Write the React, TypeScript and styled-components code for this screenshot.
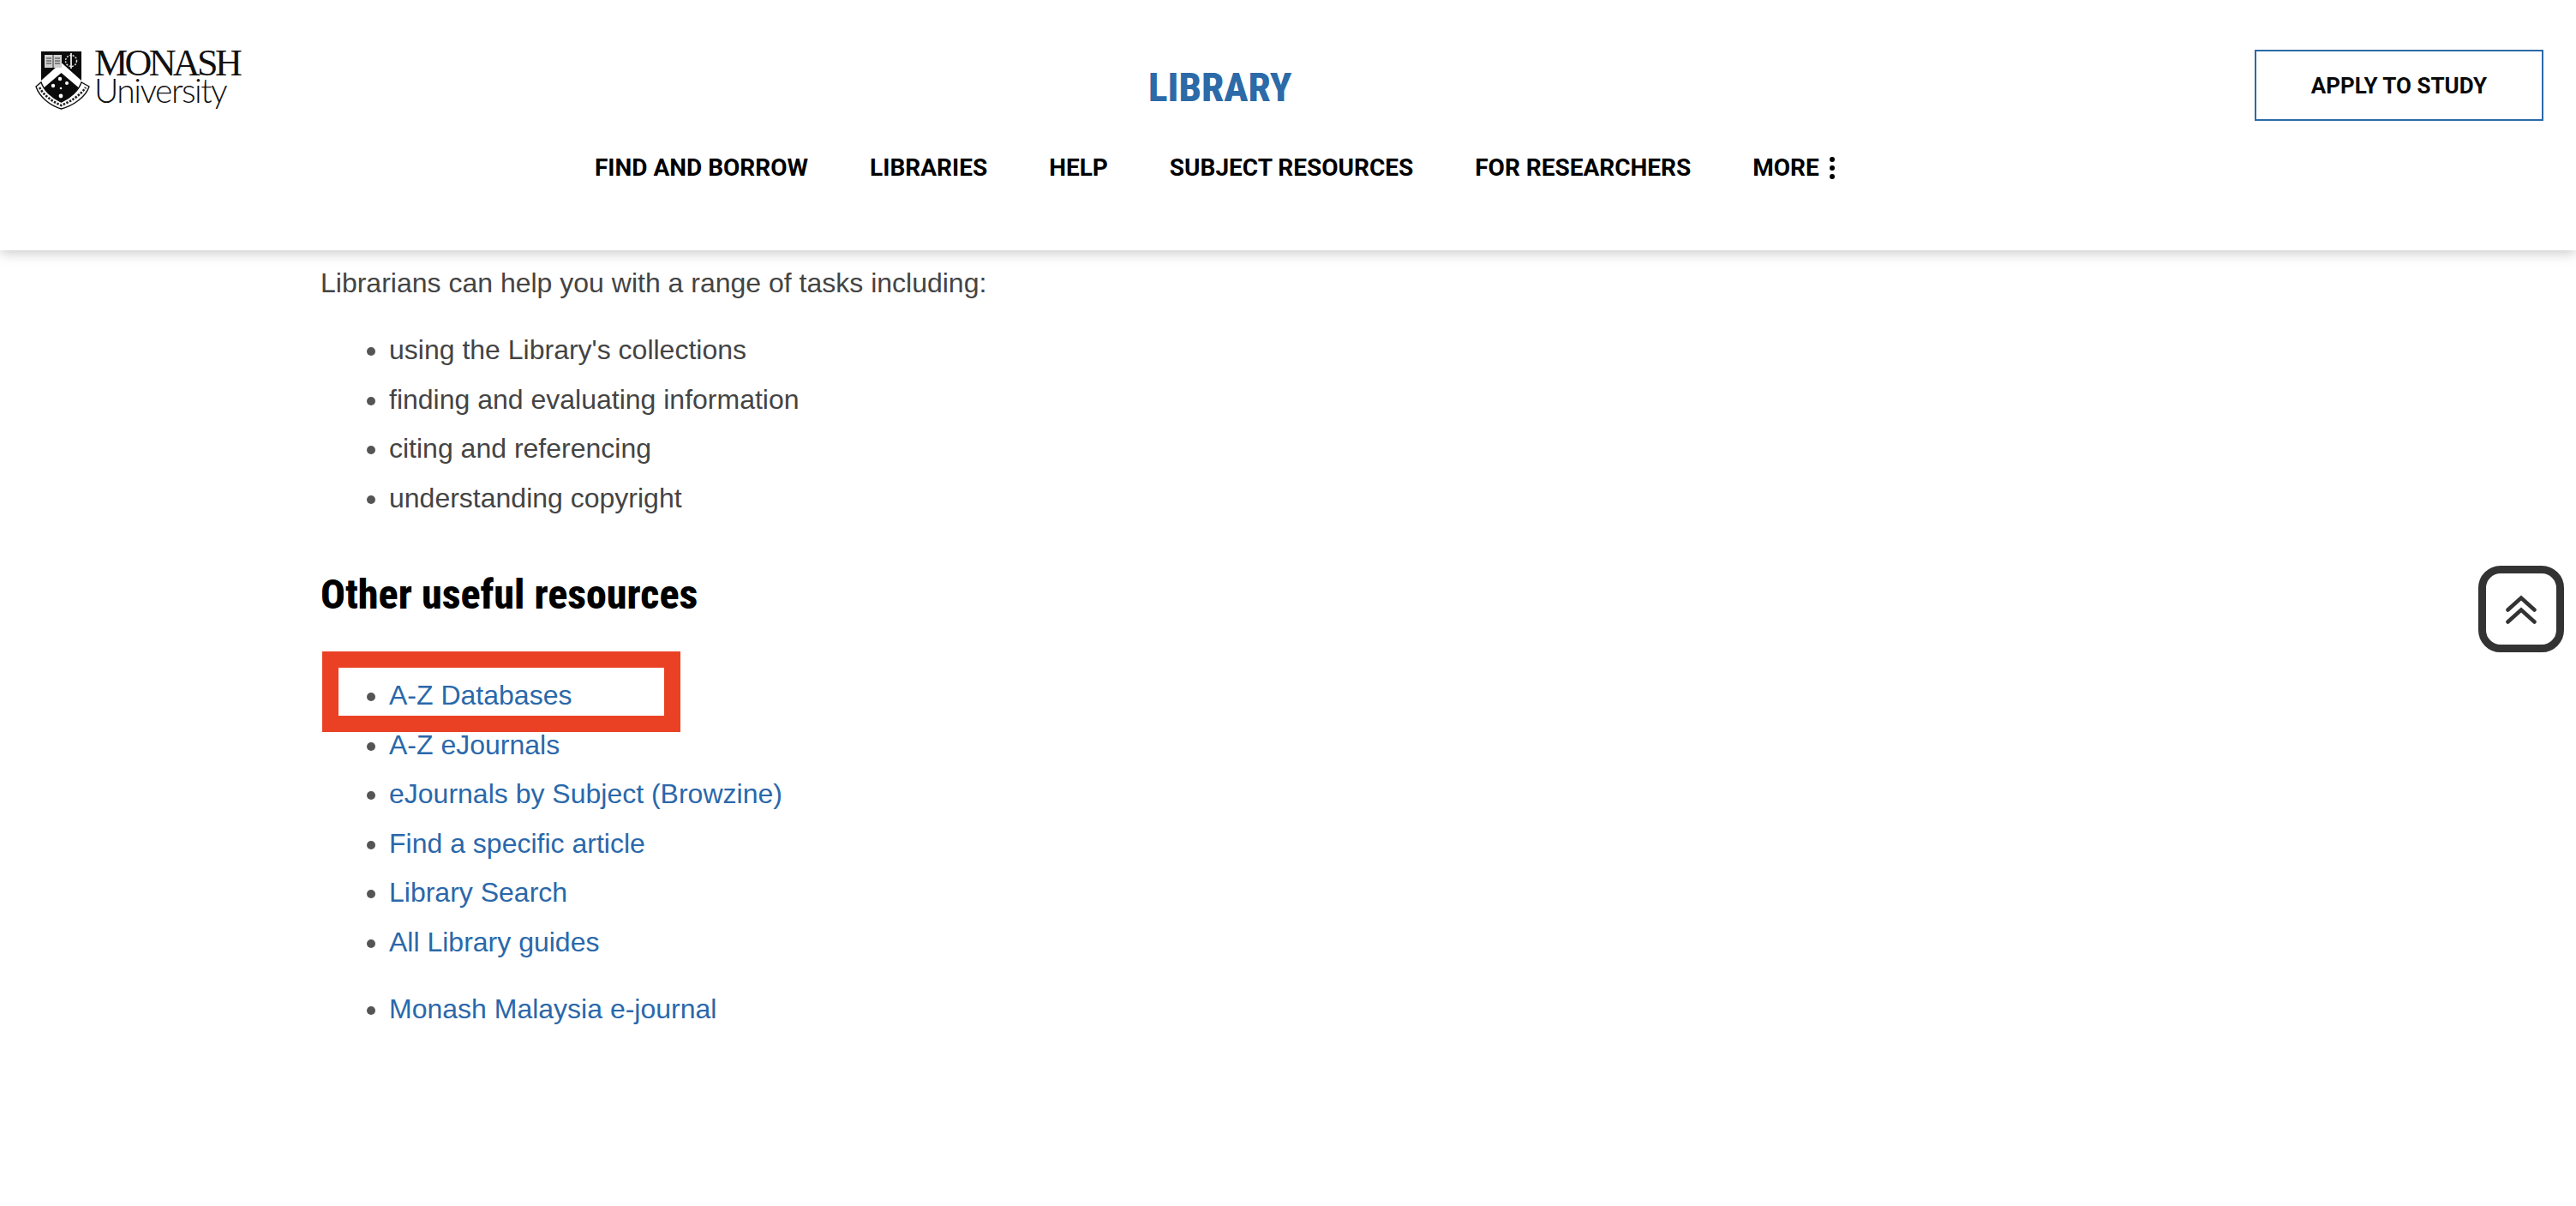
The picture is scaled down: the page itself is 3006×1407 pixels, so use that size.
import styled, { createGlobalStyle } from "styled-components";

const GlobalStyle = createGlobalStyle`
  html, body {
    margin: 0;
    padding: 0;
    background: #fff;
  }
  body {
    font-family: "Liberation Sans", Arial, sans-serif;
  }
`;

const usefulLinks = [
  "A-Z eJournals",
  "eJournals by Subject (Browzine)",
  "Find a specific article",
  "Library Search",
  "All Library guides",
];

const navItems = ["FIND AND BORROW", "LIBRARIES", "HELP", "SUBJECT RESOURCES", "FOR RESEARCHERS"];

function Crest() {
  return (
    <svg width="66" height="70" viewBox="0 0 66 70">
      <path d="M8 2h47v38c0 11-12 17-23.500 23C20 57 8 51 8 40z" fill="#0b0b0b" />
      <path d="M8 36 31.500 15 55 36v11L31.500 27 8 47z" fill="#fff" />
      <rect x="12" y="6" width="20" height="15" fill="#cfcfcf" />
      <path d="M22 6v15M14 10h6M14 13h6M14 16h6M24 10h6M24 13h6M24 16h6" stroke="#333" strokeWidth="1" />
      <circle cx="43" cy="13" r="6.500" fill="none" stroke="#ddd" strokeWidth="1.500" strokeDasharray="2 1.500" />
      <path d="M43 4v18" stroke="#eee" strokeWidth="1.800" />
      <g fill="#fff">
        <circle cx="30" cy="34" r="2.200" />
        <circle cx="38" cy="39" r="2" />
        <circle cx="22" cy="42" r="2.200" />
        <circle cx="31" cy="45" r="1.300" />
        <circle cx="31" cy="54" r="2.400" />
      </g>
      <path
        d="M2 43 8 38c3 9 12 18 23.500 23C43 56 52 47 55 38l9 5c-4 12-18 22-32.500 26C18 65 6 55 2 43z"
        fill="#fff"
        stroke="#111"
        strokeWidth="1.400"
      />
      <path
        d="M6 44c5 9 14 16 25.500 21C43 60 54 53 60 44"
        fill="none"
        stroke="#222"
        strokeWidth="2.600"
        strokeDasharray="2.500 1.500"
      />
    </svg>
  );
}

export default function App() {
  return (
    <Page>
      <GlobalStyle />
      <Header>
        <TopRow>
          <Logo>
            <Crest />
            <Wordmark>
              <Monash>MONASH</Monash>
              <University>University</University>
            </Wordmark>
          </Logo>
          <SiteTitle>LIBRARY</SiteTitle>
          <ApplyButton>APPLY TO STUDY</ApplyButton>
        </TopRow>
        <Nav>
          {navItems.map((item) => (
            <NavItem key={item}>{item}</NavItem>
          ))}
          <NavItem>
            MORE
            <Dots>
              <i />
              <i />
              <i />
            </Dots>
          </NavItem>
        </Nav>
      </Header>

      <Content>
        <Intro>Librarians can help you with a range of tasks including:</Intro>
        <List>
          <li>using the Library's collections</li>
          <li>finding and evaluating information</li>
          <li>citing and referencing</li>
          <li>understanding copyright</li>
        </List>

        <Heading>Other useful resources</Heading>

        <List>
          <HighlightItem>
            <Link href="#">A-Z Databases</Link>
            <Highlight />
          </HighlightItem>
          {usefulLinks.map((link) => (
            <li key={link}>
              <Link href="#">{link}</Link>
            </li>
          ))}
        </List>
        <SecondList>
          <li>
            <Link href="#">Monash Malaysia e-journal</Link>
          </li>
        </SecondList>
      </Content>

      <BackToTop aria-label="Back to top">
        <svg width="36" height="36" viewBox="0 0 36 36">
          <path
            d="M2.500 17.500 18 3.500 33.500 17.500M2.500 31.500 18 17.500 33.500 31.500"
            fill="none"
            stroke="#333"
            strokeWidth="4.500"
            strokeLinecap="round"
          />
        </svg>
      </BackToTop>
    </Page>
  );
}

const Page = styled.div`
  position: relative;
  min-height: 1407px;
  overflow: hidden;
`;

const Header = styled.header`
  height: 292px;
  box-sizing: border-box;
  padding-top: 58px;
  background: #fff;
  box-shadow: 0 3px 14px rgba(0, 0, 0, 0.22);
`;

const TopRow = styled.div`
  display: grid;
  grid-template-columns: 1300px 169px 1fr;
  align-items: start;
  padding: 0 38px 0 40px;
`;

const Logo = styled.div`
  display: flex;
  gap: 4px;
  height: 70px;
`;

const Wordmark = styled.div`
  display: flex;
  flex-direction: column;
`;

const Monash = styled.span`
  font-family: "Liberation Serif", "Times New Roman", serif;
  font-size: 44px;
  line-height: 31px;
  letter-spacing: -3.600px;
  color: #111;
`;

const University = styled.span`
  font-family: Lato, "Liberation Sans", sans-serif;
  font-weight: 300;
  font-size: 39px;
  line-height: 33px;
  letter-spacing: -1.500px;
  color: #111;
`;

const SiteTitle = styled.div`
  margin-top: 26px;
  font-family: Roboto, sans-serif;
  font-stretch: 75%;
  font-weight: 800;
  font-size: 47px;
  line-height: 36px;
  color: #2c6aa8;
  white-space: nowrap;
`;

const ApplyButton = styled.a`
  justify-self: end;
  display: flex;
  align-items: center;
  justify-content: center;
  box-sizing: border-box;
  width: 337px;
  height: 83px;
  border: 2px solid #2c6aa8;
  font-family: Roboto, sans-serif;
  font-weight: 700;
  font-size: 26px;
  color: #0a0a0a;
`;

const Nav = styled.nav`
  display: flex;
  gap: 72px;
  margin: 38px 0 0 694px;
`;

const NavItem = styled.a`
  display: flex;
  align-items: center;
  gap: 12px;
  font-family: Roboto, sans-serif;
  font-weight: 700;
  font-size: 28px;
  line-height: 34px;
  color: #000;
  white-space: nowrap;
`;

const Dots = styled.span`
  display: flex;
  flex-direction: column;
  gap: 4px;

  i {
    display: block;
    width: 6px;
    height: 6px;
    border-radius: 50%;
    background: #000;
  }
`;

const Content = styled.main`
  padding: 15px 0 0 374px;
  font-size: 32px;
  color: #444;
`;

const Intro = styled.p`
  margin: 0 0 27px;
  line-height: 46px;
`;

const List = styled.ul`
  margin: 0;
  padding: 0 0 0 80px;
  list-style: disc;

  li {
    line-height: 57.500px;
  }
  li::marker {
    color: #555;
  }
`;

const SecondList = styled(List)`
  margin-top: 21px;
`;

const HighlightItem = styled.li`
  position: relative;
`;

const Highlight = styled.span`
  position: absolute;
  left: -78px;
  top: -23px;
  width: 418px;
  height: 94px;
  box-sizing: border-box;
  border: 19px solid #ea4125;
  pointer-events: none;
`;

const Heading = styled.h2`
  margin: 56px 0 61px;
  font-family: Roboto, sans-serif;
  font-stretch: 75%;
  font-weight: 800;
  font-size: 48px;
  line-height: 56px;
  color: #000;
`;

const Link = styled.a`
  color: #2a68aa;
  text-decoration: none;
`;

const BackToTop = styled.button`
  position: absolute;
  left: 2892px;
  top: 660px;
  display: flex;
  align-items: center;
  justify-content: center;
  box-sizing: border-box;
  width: 100px;
  height: 101px;
  padding: 3px 0 0;
  border: 9px solid #333;
  border-radius: 26px;
  background: #fff;
`;
